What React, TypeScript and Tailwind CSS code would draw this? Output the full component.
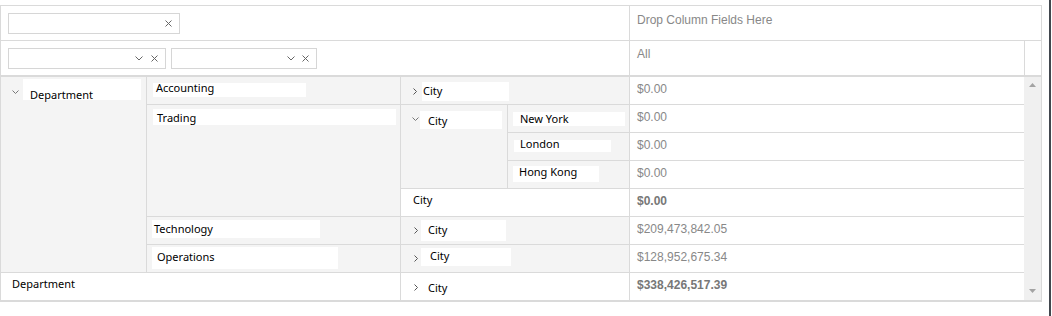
import React from "react";

const LBL = "font-['Noto_Sans',sans-serif] text-[11px] leading-[15px] text-black whitespace-nowrap";
const VAL = "font-['Liberation_Sans',Arial,sans-serif] text-[12px] leading-[15px] text-[#888] pl-[7px] pt-[5px] whitespace-nowrap";
const VALB = "font-['Liberation_Sans',Arial,sans-serif] text-[12px] leading-[15px] text-[#777] font-bold pl-[7px] pt-[5px] whitespace-nowrap";

function ChevDown({ className = "", color = "#777" }: { className?: string; color?: string }) {
  return (
    <svg width="7" height="4" viewBox="0 0 7 4" className={"shrink-0 " + className}>
      <path d="M0.5 0.5 L3.5 3.5 L6.5 0.5" fill="none" stroke={color} strokeWidth="1" />
    </svg>
  );
}

function ChevDownWide({ className = "" }: { className?: string }) {
  return (
    <svg width="8" height="5" viewBox="0 0 8 5" className={"shrink-0 " + className}>
      <path d="M0.5 0.5 L4 4 L7.5 0.5" fill="none" stroke="#666" strokeWidth="1" />
    </svg>
  );
}

function ChevRight({ className = "" }: { className?: string }) {
  return (
    <svg width="4" height="7" viewBox="0 0 4 7" className={"shrink-0 " + className}>
      <path d="M0.5 0.5 L3.5 3.5 L0.5 6.5" fill="none" stroke="#555" strokeWidth="1" />
    </svg>
  );
}

function XIcon() {
  return (
    <svg width="7" height="7" viewBox="0 0 7 7" className="shrink-0">
      <path d="M0.5 0.5 L6.5 6.5 M6.5 0.5 L0.5 6.5" fill="none" stroke="#666" strokeWidth="1" />
    </svg>
  );
}

const CELL = "border-r border-b border-[#dadada]";

export default function App() {
  return (
    <div className="w-[1052px] h-[316px] bg-white flex items-start overflow-hidden">
      <div className="w-[1042px] mt-[5px] border border-b-2 border-[#dadada] shrink-0">
        {/* header row 1 */}
        <div className="flex h-[35px] border-b border-[#dadada]">
          <div className="w-[629px] border-r border-[#dadada] flex items-start">
            <div className="ml-[7px] mt-[7px] w-[172px] h-[21px] border border-[#d6d6d6] flex items-center justify-end pr-[7px]">
              <XIcon />
            </div>
          </div>
          <div className="flex-1 pl-[7px] pt-[7px] font-['Liberation_Sans',Arial,sans-serif] text-[12px] leading-[15px] text-[#888]">
            Drop Column Fields Here
          </div>
        </div>
        {/* header row 2 */}
        <div className="flex h-[36px] border-b-2 border-[#dadada]">
          <div className="w-[629px] border-r border-[#dadada] flex items-start gap-[5px] pl-[7px] pt-[7px]">
            <div className="w-[158px] h-[21px] border border-[#d6d6d6] flex items-center justify-end gap-[8px] pr-[7px]">
              <ChevDownWide />
              <XIcon />
            </div>
            <div className="w-[146px] h-[21px] border border-[#d6d6d6] flex items-center justify-end gap-[7px] pr-[7px]">
              <ChevDownWide />
              <XIcon />
            </div>
          </div>
          <div className="w-[395px] border-r border-[#dadada] pl-[7px] pt-[6px] font-['Liberation_Sans',Arial,sans-serif] text-[12px] leading-[15px] text-[#888]">
            All
          </div>
          <div className="flex-1" />
        </div>
        {/* body */}
        <div className="grid grid-cols-[146px_254px_107px_122px_394px_17px] grid-rows-[28px_28px_28px_28px_28px_28px_28px_27px]">
          {/* Department (expanded) */}
          <div className={"col-start-1 row-start-1 row-span-7 bg-[#f4f4f4] flex items-start " + CELL}>
            <ChevDown className="ml-[11px] mt-[13px]" />
            <div className="ml-[4px] mt-[2px] w-[118px] h-[21px] bg-white flex items-start">
              <div className={LBL + " pl-[7px] pt-[8px]"}>Department</div>
            </div>
          </div>

          {/* Accounting */}
          <div className={"col-start-2 row-start-1 bg-[#f4f4f4] flex items-start " + CELL}>
            <div className="ml-[6px] mt-[6px] w-[153px] h-[14px] bg-white flex items-start">
              <div className={LBL + " pl-[3px] -mt-[3px]"}>Accounting</div>
            </div>
          </div>
          <div className={"col-start-3 col-span-2 row-start-1 bg-[#f4f4f4] flex items-start " + CELL}>
            <ChevRight className="ml-[12px] mt-[11px]" />
            <div className="ml-[5px] mt-[5px] w-[87px] h-[19px] bg-white flex items-start">
              <div className={LBL + " pl-[1px] pt-[1px]"}>City</div>
            </div>
          </div>
          <div className="col-start-5 row-start-1 border-b border-[#dadada]">
            <div className={VAL}>$0.00</div>
          </div>

          {/* Trading */}
          <div className={"col-start-2 row-start-2 row-span-4 bg-[#f4f4f4] flex items-start " + CELL}>
            <div className="ml-[6px] mt-[4px] w-[243px] h-[16px] bg-white flex items-start">
              <div className={LBL + " pl-[4px] pt-[1px]"}>Trading</div>
            </div>
          </div>
          <div className={"col-start-3 row-start-2 row-span-3 bg-[#f4f4f4] flex items-start " + CELL}>
            <ChevDown className="ml-[11px] mt-[12px]" />
            <div className="ml-[1px] mt-[6px] w-[82px] h-[18px] bg-white flex items-start">
              <div className={LBL + " pl-[8px] pt-[2px]"}>City</div>
            </div>
          </div>
          <div className={"col-start-4 row-start-2 bg-[#f4f4f4] flex items-start " + CELL}>
            <div className="ml-[5px] mt-[7px] w-[112px] h-[14px] bg-white flex items-start">
              <div className={LBL + " pl-[7px] -mt-[1px]"}>New York</div>
            </div>
          </div>
          <div className="col-start-5 row-start-2 border-b border-[#dadada]">
            <div className={VAL}>$0.00</div>
          </div>
          <div className={"col-start-4 row-start-3 bg-[#f4f4f4] flex items-start " + CELL}>
            <div className="ml-[6px] mt-[7px] w-[97px] h-[12px] bg-white flex items-start">
              <div className={LBL + " pl-[6px] -mt-[4px]"}>London</div>
            </div>
          </div>
          <div className="col-start-5 row-start-3 border-b border-[#dadada]">
            <div className={VAL}>$0.00</div>
          </div>
          <div className={"col-start-4 row-start-4 bg-[#f4f4f4] flex items-start " + CELL}>
            <div className="ml-[5px] mt-[5px] w-[86px] h-[16px] bg-white flex items-start">
              <div className={LBL + " pl-[6px] -mt-[2px]"}>Hong Kong</div>
            </div>
          </div>
          <div className="col-start-5 row-start-4 border-b border-[#dadada]">
            <div className={VAL}>$0.00</div>
          </div>
          <div className={"col-start-3 col-span-2 row-start-5 bg-white " + CELL}>
            <div className={LBL + " pl-[12px] pt-[3px]"}>City</div>
          </div>
          <div className="col-start-5 row-start-5 border-b border-[#dadada]">
            <div className={VALB}>$0.00</div>
          </div>

          {/* Technology */}
          <div className={"col-start-2 row-start-6 bg-[#f4f4f4] flex items-start " + CELL}>
            <div className="ml-[5px] mt-[3px] w-[168px] h-[18px] bg-white flex items-start">
              <div className={LBL + " pl-[2px] pt-[1px]"}>Technology</div>
            </div>
          </div>
          <div className={"col-start-3 col-span-2 row-start-6 bg-[#f4f4f4] flex items-start " + CELL}>
            <ChevRight className="ml-[13px] mt-[10px]" />
            <div className="ml-[3px] mt-[3px] w-[85px] h-[21px] bg-white flex items-start">
              <div className={LBL + " pl-[7px] pt-[2px]"}>City</div>
            </div>
          </div>
          <div className="col-start-5 row-start-6 border-b border-[#dadada]">
            <div className={VAL}>$209,473,842.05</div>
          </div>

          {/* Operations */}
          <div className={"col-start-2 row-start-7 bg-[#f4f4f4] flex items-start " + CELL}>
            <div className="ml-[5px] mt-[2px] w-[186px] h-[22px] bg-white flex items-start">
              <div className={LBL + " pl-[5px] pt-[2px]"}>Operations</div>
            </div>
          </div>
          <div className={"col-start-3 col-span-2 row-start-7 bg-[#f4f4f4] flex items-start " + CELL}>
            <ChevRight className="ml-[13px] mt-[10px]" />
            <div className="ml-[3px] mt-[3px] w-[90px] h-[18px] bg-white flex items-start">
              <div className={LBL + " pl-[9px]"}>City</div>
            </div>
          </div>
          <div className="col-start-5 row-start-7 border-b border-[#dadada]">
            <div className={VAL}>$128,952,675.34</div>
          </div>

          {/* Grand total */}
          <div className="col-start-1 col-span-2 row-start-8 bg-white border-r border-[#dadada]">
            <div className={LBL + " pl-[11px] pt-[3px]"}>Department</div>
          </div>
          <div className="col-start-3 col-span-2 row-start-8 bg-white border-r border-[#dadada] flex items-start">
            <ChevRight className="ml-[13px] mt-[11px]" />
            <div className={LBL + " ml-[10px] pt-[7px]"}>City</div>
          </div>
          <div className="col-start-5 row-start-8">
            <div className={VALB}>$338,426,517.39</div>
          </div>

          {/* scrollbar */}
          <div className="col-start-6 row-start-1 row-span-8 bg-[#f0f0f0] flex flex-col justify-between items-center pt-[6px] pb-[7px]">
            <svg width="7" height="4" viewBox="0 0 7 4">
              <path d="M3.5 0 L7 4 L0 4 Z" fill="#a3a3a3" />
            </svg>
            <svg width="7" height="4" viewBox="0 0 7 4">
              <path d="M0 0 L7 0 L3.5 4 Z" fill="#a3a3a3" />
            </svg>
          </div>
        </div>
      </div>
      <div className="ml-[7px] w-[2px] h-[316px] bg-[#42474e] shrink-0" />
    </div>
  );
}
